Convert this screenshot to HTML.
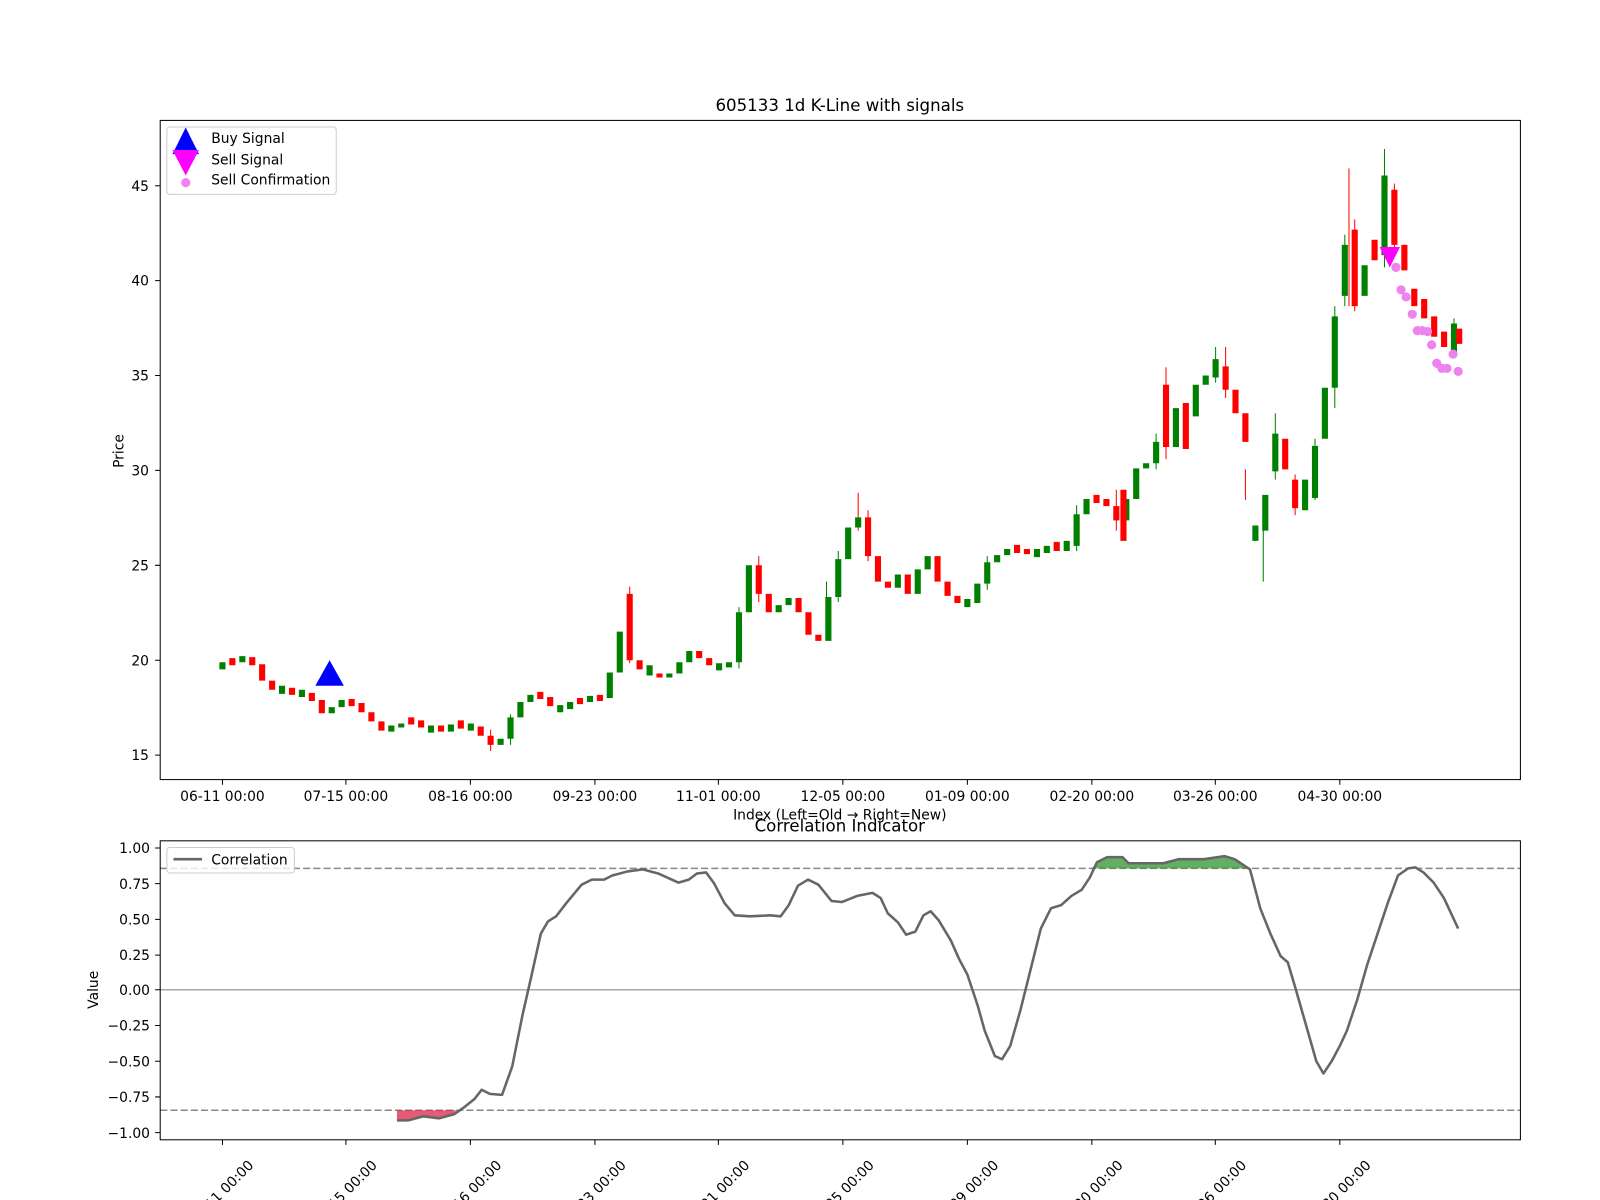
<!DOCTYPE html>
<html><head><meta charset="utf-8"><style>
html,body{margin:0;padding:0;background:#fff;}
svg{display:block;font-family:"DejaVu Sans","Liberation Sans",sans-serif;}
</style></head><body>
<svg width="1600" height="1200" viewBox="0 0 1568 1176" xmlns="http://www.w3.org/2000/svg">
<rect width="1568" height="1176" fill="#fff"/>
<!-- candles -->
<path fill="none" stroke="#008000" stroke-width="1" d="M1356.8 146V262 M1238 500V570 M810 570V620 M1308.1 300V400 M1317.9 230V300 M1133 425V460 M1191.3 340V375 M1055.1 495V540 M967.5 545V578 M821.5 540V590 M724.2 595V655 M500.3 700V730 M1424.9 312V350 M1288.7 430V490 M1249.8 405V470"/>
<path fill="none" stroke="#ff0000" stroke-width="1" d="M617.1 575V650 M1322 165V300 M841 483V520 M1142.7 360V450 M1220.5 460V490 M1327.6 215V305 M1366.5 180V245 M1094 480V520 M850.7 500V550 M743.6 545V590 M480.8 715V736 M1201.1 340V390 M1269.2 465V505"/>
<path fill="none" stroke="#008000" stroke-width="6" d="M218 656V649 M237.5 649V643 M276.4 680V672 M295.9 683V676 M325.1 699V693 M334.8 693V686 M383.5 717V711 M393.2 713V709 M422.4 718V711 M441.9 717V710 M461.4 716V709 M490.6 730V724 M500.3 724V703 M510 703V688 M519.8 688V681 M549 698V691 M558.7 695V688 M578.2 688V682 M597.6 684V659 M607.4 659V619 M636.6 662V652 M656 664V660 M665.8 660V649 M675.5 649V638 M704.7 657V650 M714.4 654V649 M724.2 649V600 M733.9 600V554 M763.1 600V593 M772.8 593V586 M811.8 628V585 M821.5 585V548 M831.2 548V517 M841 517V507 M879.9 576V563 M899.4 582V558 M909.1 558V545 M948 595V587 M957.8 591V572 M967.5 572V551 M977.2 551V544 M987 544V538 M1016.2 546V538 M1025.9 542V535 M1045.4 540V530 M1055.1 535V504 M1064.8 504V489 M1103.8 510V489 M1113.5 489V459 M1123.2 459V454 M1133 454V433 M1152.4 438V400 M1171.9 408V377 M1181.6 377V368 M1191.3 370V352 M1230.3 530V515 M1240 520V485 M1249.8 462V425 M1279 500V470 M1288.7 488V437 M1298.4 430V380 M1308.1 380V310 M1317.9 290V240 M1337.3 290V260 M1356.8 250V172 M1424.9 345V317"/>
<path fill="none" stroke="#ff0000" stroke-width="6" d="M227.7 645V652 M247.2 644V652 M256.9 651V667 M266.7 667V676 M286.2 674V681 M305.6 679V687 M315.4 686V699 M344.6 685V692 M354.3 689V698 M364 698V707 M373.8 707V716 M403 703V710 M412.7 706V713 M432.2 711V717 M451.6 706V714 M471.1 712V721 M480.8 721V730 M529.5 678V685 M539.2 683V692 M568.4 684V690 M587.9 681V687 M617.1 582V647 M626.8 647V656 M646.3 660V664 M685.2 638V645 M695 645V652 M743.6 554V582 M753.4 582V600 M782.6 586V600 M792.3 600V622 M802 622V628 M850.7 507V545 M860.4 545V570 M870.2 570V576 M889.6 563V582 M918.8 545V570 M928.6 570V584 M938.3 584V591 M996.7 534V542 M1006.4 538V543 M1035.6 531V540 M1074.6 485V493 M1084.3 489V496 M1094 496V510 M1101 480V530 M1142.7 377V438 M1162.1 395V440 M1201.1 359V382 M1210.8 382V405 M1220.5 405V433 M1259.5 430V460 M1269.2 470V498 M1327.6 225V300 M1347.1 235V255 M1366.5 186V240 M1376.3 240V265 M1386 283V300 M1395.7 293V312 M1405.5 310V330 M1415.2 325V340 M1430 322V337"/>
<!-- correlation -->
<line x1="157" x2="1490" y1="970" y2="970" stroke="#aaa" stroke-width="1.5"/>
<line x1="157" x2="1490" y1="851" y2="851" stroke="#888" stroke-width="1.5" stroke-dasharray="7,3"/>
<line x1="157" x2="1490" y1="1088" y2="1088" stroke="#888" stroke-width="1.5" stroke-dasharray="7,3"/>
<path d="M389,1088 L389,1098 L400,1098 L415,1094 L430,1096 L445,1092 L447,1088 Z" fill="#dc143c" fill-opacity="0.7"/>
<path d="M1070,851 L1075,845 L1085,840 L1100,840 L1106,846 L1140,846 L1155,842 L1180,842 L1200,839 L1210,842 L1222,851 Z" fill="#228b22" fill-opacity="0.7"/>
<polyline fill="none" stroke="#666" stroke-width="2.5" stroke-linejoin="round" points="389,1098 400,1098 415,1094 430,1096 445,1092 455,1085 465,1077 472,1068 480,1072 492,1073 502,1045 512,995 520,960 530,915 537,903 545,898 555,885 570,867 580,862 592,862 600,858 615,854 630,852 645,856 665,865 675,862 683,856 692,855 700,866 710,885 720,897 735,898 755,897 765,898 773,887 782,868 792,862 802,867 815,883 825,884 840,878 855,875 863,880 870,895 880,904 888,916 897,913 905,897 912,893 920,902 932,922 940,940 948,955 958,985 965,1010 975,1035 982,1038 990,1025 1000,990 1010,950 1020,910 1030,890 1040,887 1050,878 1060,872 1068,860 1075,845 1085,840 1100,840 1106,846 1140,846 1155,842 1180,842 1200,839 1210,842 1225,852 1235,890 1245,915 1255,937 1262,943 1270,970 1280,1005 1290,1040 1297,1052 1305,1040 1313,1025 1320,1010 1330,980 1340,945 1350,915 1360,885 1370,858 1380,851 1387,850 1395,855 1405,865 1415,880 1429,910"/>
<!-- axes frames -->
<rect x="157" y="118" width="1333" height="646" fill="none" stroke="#000" stroke-width="1"/>
<rect x="157" y="824" width="1333" height="293" fill="none" stroke="#000" stroke-width="1"/>
<path stroke="#000" stroke-width="1" fill="none" d="M218 764V769M339 764V769M461 764V769M583 764V769M704 764V769M826 764V769M948 764V769M1070 764V769M1191 764V769M1313 764V769 M218 1117V1122M339 1117V1122M461 1117V1122M583 1117V1122M704 1117V1122M826 1117V1122M948 1117V1122M1070 1117V1122M1191 1117V1122M1313 1117V1122 M152 182H157M152 275H157M152 368H157M152 461H157M152 554H157M152 647H157M152 740H157 M152 831H157M152 866H157M152 901H157M152 936H157M152 970H157M152 1005H157M152 1040H157M152 1075H157M152 1110H157"/>
<g font-size="13.6" fill="#000">
<text x="823" y="109" text-anchor="middle" font-size="16.3">605133 1d K-Line with signals</text>
<text x="823" y="803" text-anchor="middle">Index (Left=Old → Right=New)</text>
<text x="823" y="815" text-anchor="middle" font-size="16.3">Correlation Indicator</text>
<text transform="translate(121,442) rotate(-90)" text-anchor="middle">Price</text>
<text transform="translate(96,970) rotate(-90)" text-anchor="middle">Value</text>
<g text-anchor="end">
<text x="146" y="187">45</text><text x="146" y="280">40</text><text x="146" y="373">35</text>
<text x="146" y="466">30</text><text x="146" y="559">25</text><text x="146" y="652">20</text><text x="146" y="745">15</text>
<text x="147" y="836">1.00</text><text x="147" y="871">0.75</text><text x="147" y="906">0.50</text>
<text x="147" y="941">0.25</text><text x="147" y="975">0.00</text><text x="147" y="1010">−0.25</text>
<text x="147" y="1045">−0.50</text><text x="147" y="1080">−0.75</text><text x="147" y="1115">−1.00</text>
</g>
<g text-anchor="middle">
<text x="218" y="785">06-11 00:00</text><text x="339" y="785">07-15 00:00</text><text x="461" y="785">08-16 00:00</text>
<text x="583" y="785">09-23 00:00</text><text x="704" y="785">11-01 00:00</text><text x="826" y="785">12-05 00:00</text>
<text x="948" y="785">01-09 00:00</text><text x="1070" y="785">02-20 00:00</text><text x="1191" y="785">03-26 00:00</text>
<text x="1313" y="785">04-30 00:00</text>
</g>
<g text-anchor="middle">
<text transform="translate(220,1172) rotate(-45)">06-11 00:00</text>
<text transform="translate(341,1172) rotate(-45)">07-15 00:00</text>
<text transform="translate(463,1172) rotate(-45)">08-16 00:00</text>
<text transform="translate(585,1172) rotate(-45)">09-23 00:00</text>
<text transform="translate(706,1172) rotate(-45)">11-01 00:00</text>
<text transform="translate(828,1172) rotate(-45)">12-05 00:00</text>
<text transform="translate(950,1172) rotate(-45)">01-09 00:00</text>
<text transform="translate(1072,1172) rotate(-45)">02-20 00:00</text>
<text transform="translate(1193,1172) rotate(-45)">03-26 00:00</text>
<text transform="translate(1315,1172) rotate(-45)">04-30 00:00</text>
</g>
</g>
<!-- signals -->
<polygon points="309,672 337,672 323,647" fill="#0000ff"/>
<polygon points="1352,242 1372,242 1362,262" fill="#ff00ff"/>
<g fill="#ee82ee">
<circle cx="1368" cy="262" r="4.5"/><circle cx="1373" cy="284" r="4.5"/><circle cx="1378" cy="291" r="4.5"/>
<circle cx="1384" cy="308" r="4.5"/><circle cx="1389" cy="324" r="4.5"/><circle cx="1394" cy="324" r="4.5"/>
<circle cx="1399" cy="325" r="4.5"/><circle cx="1403" cy="338" r="4.5"/><circle cx="1408" cy="356" r="4.5"/>
<circle cx="1413" cy="361" r="4.5"/><circle cx="1418" cy="361" r="4.5"/><circle cx="1424" cy="347" r="4.5"/>
<circle cx="1429" cy="364" r="4.5"/>
</g>
<!-- legend top -->
<rect x="163.5" y="124.5" width="166" height="66" rx="3" fill="#fff" fill-opacity="0.8" stroke="#ccc"/>
<polygon points="169,151 195,151 182,125" fill="#0000ff"/>
<polygon points="169,147 195,147 182,172" fill="#ff00ff"/>
<circle cx="182" cy="179" r="4.5" fill="#ee82ee"/>
<g font-size="13.6"><text x="207" y="140">Buy Signal</text><text x="207" y="161">Sell Signal</text><text x="207" y="181">Sell Confirmation</text></g>
<!-- legend bottom -->
<rect x="163.5" y="830.5" width="125" height="25" rx="3" fill="#fff" fill-opacity="0.8" stroke="#ccc"/>
<line x1="170" y1="842" x2="198" y2="842" stroke="#666" stroke-width="2.5"/>
<text x="207" y="847" font-size="13.6">Correlation</text>
</svg>
</body></html>
